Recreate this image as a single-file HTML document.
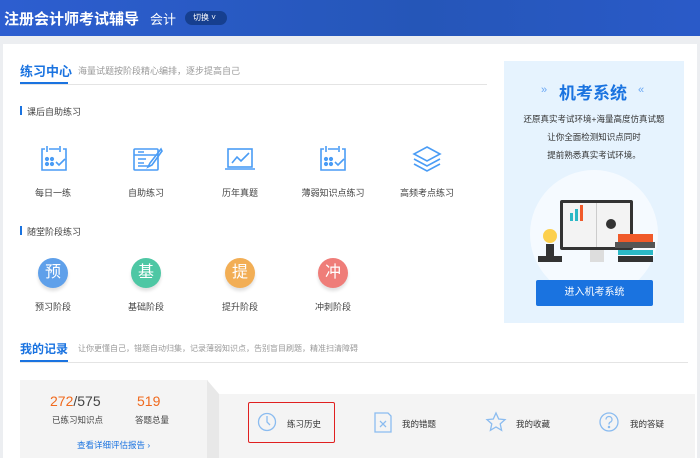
<!DOCTYPE html>
<html><head><meta charset="utf-8"><style>
*{margin:0;padding:0;box-sizing:border-box}
body{width:700px;height:458px;overflow:hidden;background:#eceef1;font-family:"Liberation Sans","Noto Sans CJK SC",sans-serif;position:relative}
.a{position:absolute;white-space:nowrap}
.hdr{left:0;top:0;width:700px;height:36px;background:linear-gradient(90deg,#2d5ed0,#2556b8 60%,#2a5ac8)}
.card{left:3px;top:44px;width:694px;height:414px;background:#fff}
.t{font-size:9px;color:#444}
.ic{position:absolute;width:32px;height:32px}
.lab{font-size:9px;color:#444;width:90px;text-align:center}
.circ{position:absolute;width:30px;height:30px;border-radius:50%;color:#fff;font-size:16px;text-align:center;line-height:30px;box-shadow:0 3px 3px rgba(0,0,0,.12)}
</style></head><body>
<div class="a hdr"></div>
<div class="a" style="left:4px;top:8px;font-size:15px;font-weight:bold;color:#fff">注册会计师考试辅导</div>
<div class="a" style="left:150px;top:9px;font-size:13px;color:#fff">会计</div>
<div class="a" style="left:185px;top:11px;width:42px;height:14px;border-radius:7px;background:#163f8f;color:#fff;font-size:8px;line-height:14px;padding-left:8px">切换 ˅</div>
<div class="a card"></div>

<div class="a" style="left:20px;top:61px;font-size:13px;font-weight:bold;color:#1a73e0">练习中心</div>
<div class="a" style="left:78px;top:64px;font-size:9px;color:#999">海量试题按阶段精心编排，逐步提高自己</div>
<div class="a" style="left:20px;top:84px;width:467px;height:1px;background:#e4e4e4"></div>
<div class="a" style="left:20px;top:82px;width:48px;height:2px;background:#1a73e0"></div>

<div class="a" style="left:20px;top:106px;width:2px;height:9px;background:#1a73e0"></div>
<div class="a t" style="left:27px;top:105px">课后自助练习</div>

<svg class="ic" style="left:38px;top:141px" viewBox="0 0 32 32" fill="none" stroke="#4a9cf5" stroke-width="1.6"><path d="M7 8H4v21h24V8h-3M11 8h10"/><path d="M9 5v6M22 5v6"/><circle cx="9" cy="18" r="1.3" fill="#4a9cf5"/><circle cx="14" cy="18" r="1.3" fill="#4a9cf5"/><circle cx="9" cy="23" r="1.3" fill="#4a9cf5"/><circle cx="14" cy="23" r="1.3" fill="#4a9cf5"/><path d="M18 21l3 3 6-6"/></svg>
<svg class="ic" style="left:131px;top:141px" viewBox="0 0 32 32" fill="none" stroke="#4a9cf5" stroke-width="1.6"><rect x="3" y="8" width="24" height="21" rx="1"/><path d="M3 14h24M7 11h6M7 18h8M7 22h6M7 25h10"/><path d="M30 8L19 22l-2 4 4-2L31 10z"/></svg>
<svg class="ic" style="left:224px;top:141px" viewBox="0 0 32 32" fill="none" stroke="#4a9cf5" stroke-width="1.6"><rect x="4" y="8" width="24" height="18"/><path d="M1 28h30M8 22l5-6 4 4 8-8"/></svg>
<svg class="ic" style="left:317px;top:141px" viewBox="0 0 32 32" fill="none" stroke="#4a9cf5" stroke-width="1.6"><path d="M7 8H4v21h24V8h-3M11 8h10"/><path d="M9 5v6M22 5v6"/><circle cx="9" cy="18" r="1.3" fill="#4a9cf5"/><circle cx="14" cy="18" r="1.3" fill="#4a9cf5"/><circle cx="9" cy="23" r="1.3" fill="#4a9cf5"/><circle cx="14" cy="23" r="1.3" fill="#4a9cf5"/><path d="M18 21l3 3 6-6"/></svg>
<svg class="ic" style="left:411px;top:141px" viewBox="0 0 32 32" fill="none" stroke="#4a9cf5" stroke-width="1.6"><path d="M16 6l13 7-13 7-13-7z"/><path d="M3 18l13 7 13-7M3 23l13 7 13-7"/></svg>

<div class="a lab" style="left:8px;top:186px">每日一练</div>
<div class="a lab" style="left:101px;top:186px">自助练习</div>
<div class="a lab" style="left:195px;top:186px">历年真题</div>
<div class="a lab" style="left:288px;top:186px">薄弱知识点练习</div>
<div class="a lab" style="left:382px;top:186px">高频考点练习</div>

<div class="a" style="left:20px;top:226px;width:2px;height:9px;background:#1a73e0"></div>
<div class="a t" style="left:27px;top:225px">随堂阶段练习</div>

<div class="circ" style="left:38px;top:258px;background:#5fa0ea">预</div>
<div class="circ" style="left:131px;top:258px;background:#4ec7a4">基</div>
<div class="circ" style="left:225px;top:258px;background:#f2ae55">提</div>
<div class="circ" style="left:318px;top:258px;background:#ef7d79">冲</div>
<div class="a lab" style="left:8px;top:300px">预习阶段</div>
<div class="a lab" style="left:101px;top:300px">基础阶段</div>
<div class="a lab" style="left:195px;top:300px">提升阶段</div>
<div class="a lab" style="left:288px;top:300px">冲刺阶段</div>

<div class="a" style="left:504px;top:61px;width:180px;height:262px;background:#e6f3fe"></div>
<div class="a" style="left:541px;top:84px;font-size:11px;color:#6aa8f5">»</div>
<div class="a" style="left:559px;top:79px;font-size:17px;font-weight:bold;color:#1a73e0">机考系统</div>
<div class="a" style="left:638px;top:84px;font-size:11px;color:#6aa8f5">«</div>
<div class="a" style="left:504px;top:110px;width:180px;text-align:center;font-size:8.5px;color:#333;line-height:18px">还原真实考试环境+海量高度仿真试题<br>让你全面检测知识点同时<br>提前熟悉真实考试环境。</div>
<div class="a" style="left:530px;top:170px;width:128px;height:128px;border-radius:50%;background:#f5faff"></div>
<div class="a" style="left:560px;top:200px;width:73px;height:50px;background:#333;border-radius:2px"></div>
<div class="a" style="left:563px;top:203px;width:67px;height:44px;background:#f3f3f3"></div>
<div class="a" style="left:596px;top:203px;width:1px;height:44px;background:#ccc"></div>
<div class="a" style="left:570px;top:213px;width:3px;height:8px;background:#2bb8c6"></div>
<div class="a" style="left:575px;top:209px;width:3px;height:12px;background:#2bb8c6"></div>
<div class="a" style="left:580px;top:205px;width:3px;height:16px;background:#f05a2a"></div>
<div class="a" style="left:606px;top:219px;width:10px;height:10px;border-radius:50%;background:#333"></div>
<div class="a" style="left:590px;top:250px;width:14px;height:12px;background:#ddd"></div>
<div class="a" style="left:618px;top:234px;width:35px;height:8px;background:#f05a2a"></div>
<div class="a" style="left:615px;top:242px;width:40px;height:6px;background:#555"></div>
<div class="a" style="left:618px;top:250px;width:35px;height:5px;background:#2bb8c6"></div>
<div class="a" style="left:618px;top:256px;width:35px;height:6px;background:#333"></div>
<div class="a" style="left:543px;top:229px;width:14px;height:14px;border-radius:50%;background:#fcd04e"></div>
<div class="a" style="left:538px;top:256px;width:24px;height:6px;background:#333"></div>
<div class="a" style="left:546px;top:244px;width:8px;height:12px;background:#333"></div>
<div class="a" style="left:536px;top:280px;width:117px;height:26px;background:#1a73e0;border-radius:2px;color:#fff;font-size:10px;text-align:center;line-height:26px">进入机考系统</div>

<div class="a" style="left:20px;top:340px;font-size:12px;font-weight:bold;color:#1a73e0">我的记录</div>
<div class="a" style="left:78px;top:343px;font-size:8px;color:#999">让你更懂自己，错题自动归集，记录薄弱知识点，告别盲目刷题，精准扫清障碍</div>
<div class="a" style="left:20px;top:362px;width:668px;height:1px;background:#e4e4e4"></div>
<div class="a" style="left:20px;top:360px;width:48px;height:2px;background:#1a73e0"></div>

<div class="a" style="left:20px;top:380px;width:188px;height:78px;background:#f4f4f4"></div>
<svg class="a" style="left:207px;top:380px" width="14" height="78"><path d="M0 0L12 14V78H0z" fill="#e8e8e8"/></svg>
<div class="a" style="left:219px;top:394px;width:476px;height:64px;background:#f4f4f4"></div>
<div class="a" style="left:50px;top:393px;font-size:14px;color:#444"><span style="color:#f06a1e">272</span>/575</div>
<div class="a" style="left:137px;top:393px;font-size:14px;color:#f06a1e">519</div>
<div class="a" style="left:52px;top:414px;font-size:8.5px;color:#444">已练习知识点</div>
<div class="a" style="left:135px;top:414px;font-size:8.5px;color:#444">答题总量</div>
<div class="a" style="left:77px;top:439px;font-size:8.5px;color:#1a73e0">查看详细评估报告 ›</div>

<div class="a" style="left:248px;top:402px;width:87px;height:41px;border:1.5px solid #e02020;border-radius:2px"></div>
<svg class="a" style="left:257px;top:412px" width="20" height="20" fill="none" stroke="#8bbcf0" stroke-width="1.3"><circle cx="10" cy="10" r="8.5"/><path d="M10 4v6l3 3"/></svg>
<div class="a" style="left:287px;top:418px;font-size:8.5px;color:#333">练习历史</div>
<svg class="a" style="left:373px;top:410px" width="20" height="24" fill="none" stroke="#8bbcf0" stroke-width="1.3"><path d="M2 3h13l3 3v16H2z"/><path d="M7 11l6 6M13 11l-6 6"/></svg>
<div class="a" style="left:402px;top:418px;font-size:8.5px;color:#333">我的错题</div>
<svg class="a" style="left:485px;top:411px" width="22" height="22" fill="none" stroke="#8bbcf0" stroke-width="1.3"><path d="M11 2l2.7 6 6.3.6-4.8 4.3 1.4 6.4L11 16l-5.6 3.3 1.4-6.4L2 8.6 8.3 8z"/></svg>
<div class="a" style="left:516px;top:418px;font-size:8.5px;color:#333">我的收藏</div>
<svg class="a" style="left:598px;top:411px" width="22" height="22" fill="none" stroke="#8bbcf0" stroke-width="1.3"><circle cx="11" cy="11" r="9"/><path d="M8 8.5a3 3 0 1 1 4 2.8c-1 .4-1 1.2-1 2.2"/><circle cx="11" cy="16" r=".6" fill="#8bbcf0"/></svg>
<div class="a" style="left:630px;top:418px;font-size:8.5px;color:#333">我的答疑</div>
</body></html>
